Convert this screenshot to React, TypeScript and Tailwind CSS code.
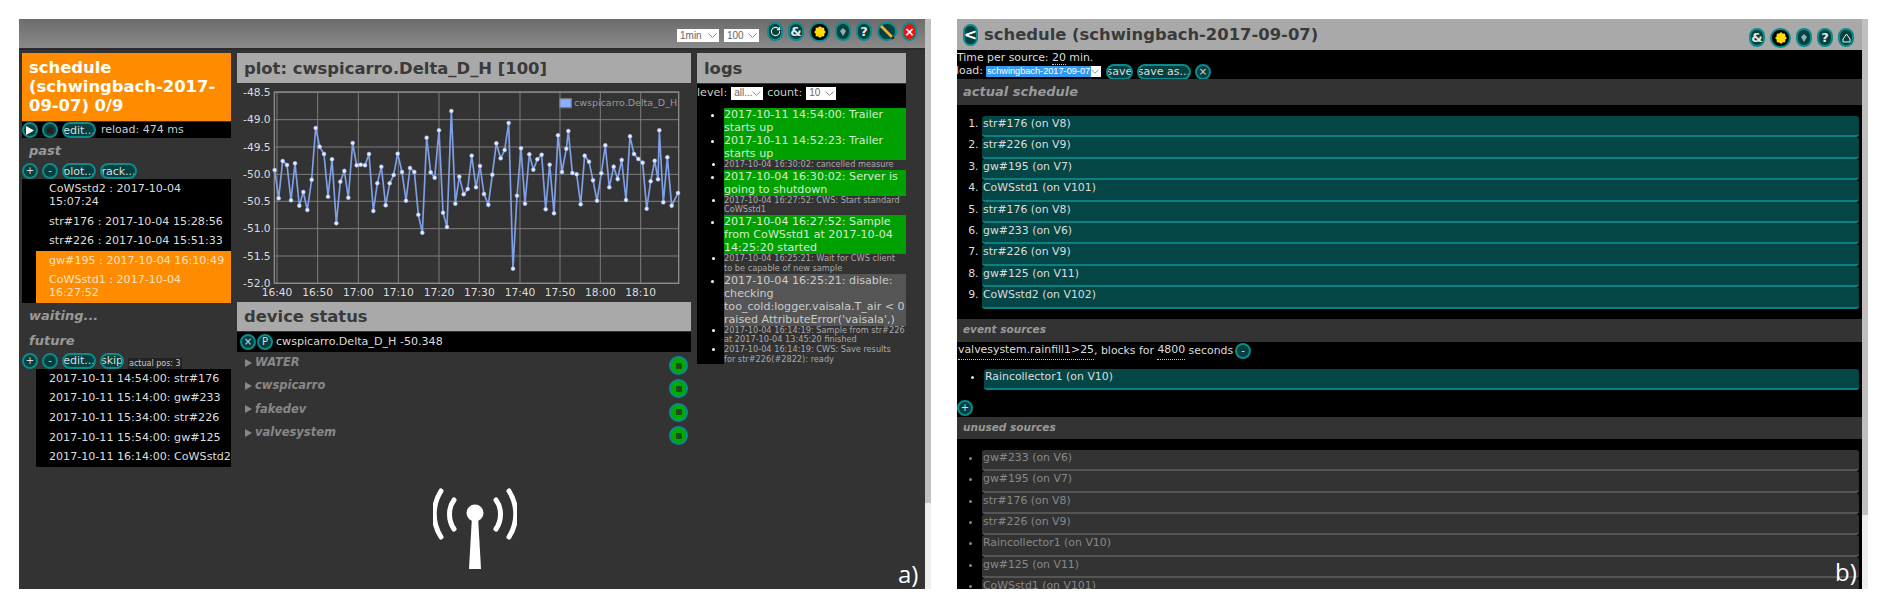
import type { ReactNode } from 'react';
import { RotateCw } from 'lucide-react';

const font = { fontFamily: '"DejaVu Sans", sans-serif' };
const arial = { fontFamily: '"Liberation Sans", sans-serif' };

const points = [
  [134, 390], [146, 475], [158, 363], [171, 375], [183, 481], [195, 370], [208, 497], [220, 456], [232, 510], [245, 419],
  [257, 264], [269, 320], [282, 342], [294, 470], [306, 358], [319, 550], [331, 425], [343, 393], [355, 473], [368, 309],
  [380, 376], [392, 374], [405, 376], [417, 342], [430, 513], [442, 430], [454, 380], [467, 496], [479, 430], [491, 405],
  [503, 341], [516, 396], [528, 482], [540, 384], [553, 396], [565, 524], [577, 578], [590, 293], [602, 397], [614, 413],
  [627, 271], [639, 518], [651, 561], [664, 213], [676, 491], [688, 410], [701, 463], [713, 447], [725, 347], [738, 442],
  [750, 378], [762, 462], [775, 494], [787, 404], [799, 310], [812, 355], [824, 330], [836, 249], [849, 686], [861, 467],
  [873, 325], [885, 491], [898, 343], [910, 389], [922, 358], [935, 344], [947, 508], [959, 374], [972, 520], [984, 286],
  [996, 396], [1009, 326], [1015, 273], [1027, 399], [1040, 403], [1052, 493], [1064, 347], [1077, 365], [1089, 421], [1101, 482],
  [1114, 400], [1126, 316], [1138, 442], [1151, 380], [1163, 417], [1175, 360], [1188, 480], [1200, 289], [1212, 342], [1225, 357],
  [1238, 368], [1250, 506], [1262, 424], [1274, 362], [1284, 418], [1288, 271], [1300, 487], [1312, 352], [1325, 497], [1344, 459],
];

const yTicks = [
  ['-48.5', 157], ['-49.0', 239], ['-49.5', 321], ['-50.0', 403],
  ['-50.5', 484], ['-51.0', 566], ['-51.5', 648], ['-52.0', 730],
] as const;

const xTicks = [
  ['16:40', 141], ['16:50', 263], ['17:00', 385], ['17:10', 505], ['17:20', 627],
  ['17:30', 748], ['17:40', 870], ['17:50', 990], ['18:00', 1111], ['18:10', 1232],
] as const;

const logs = [
  { kind: 'green', text: '2017-10-11 14:54:00: Trailer starts up' },
  { kind: 'green', text: '2017-10-11 14:52:23: Trailer starts up' },
  { kind: 'small', text: '2017-10-04 16:30:02: cancelled measure' },
  { kind: 'green', text: '2017-10-04 16:30:02: Server is going to shutdown' },
  { kind: 'small', text: '2017-10-04 16:27:52: CWS: Start standard CoWSstd1' },
  { kind: 'green', text: '2017-10-04 16:27:52: Sample from CoWSstd1 at 2017-10-04 14:25:20 started' },
  { kind: 'small', text: '2017-10-04 16:25:21: Wait for CWS client\nto be capable of new sample' },
  { kind: 'gray', text: "2017-10-04 16:25:21: disable: checking too_cold:logger.vaisala.T_air < 0 raised AttributeError('vaisala',)" },
  { kind: 'small', text: '2017-10-04 16:14:19: Sample from str#226 at 2017-10-04 13:45:20 finished' },
  { kind: 'small', text: '2017-10-04 16:14:19: CWS: Save results\nfor str#226(#2822): ready' },
];

const actual = [
  'str#176 (on V8)', 'str#226 (on V9)', 'gw#195 (on V7)', 'CoWSstd1 (on V101)', 'str#176 (on V8)',
  'gw#233 (on V6)', 'str#226 (on V9)', 'gw#125 (on V11)', 'CoWSstd2 (on V102)',
];

const unused = [
  'gw#233 (on V6)', 'gw#195 (on V7)', 'str#176 (on V8)', 'str#226 (on V9)',
  'Raincollector1 (on V10)', 'gw#125 (on V11)', 'CoWSstd1 (on V101)',
];

function Round({ children, className = '' }: { children?: ReactNode; className?: string }) {
  return (
    <span className={`flex h-4 w-4 shrink-0 items-center justify-center rounded-full border-2 border-[#0b8b8b] bg-[#044040] text-[10px] leading-none text-[#ddd] ${className}`}>
      {children}
    </span>
  );
}

function Pill({ children, className = '' }: { children: ReactNode; className?: string }) {
  return (
    <span className={`flex h-4 shrink-0 items-center justify-center overflow-hidden whitespace-nowrap rounded-full border-2 border-[#0b8b8b] bg-[#044040] text-[11px] leading-none text-[#ddd] ${className}`}>
      {children}
    </span>
  );
}

function TopIcon({ children, className = '' }: { children: ReactNode; className?: string }) {
  return (
    <span className={`flex h-[19px] items-center justify-center rounded-full border-2 border-[#0b8b8b] bg-[#044040] text-[13px] font-bold leading-none text-[#e8e8e8] ${className}`}>
      {children}
    </span>
  );
}

function Sun() {
  return (
    <span className="flex h-5 w-[21px] items-center justify-center rounded-full border-2 border-[#0b8b8b] bg-black">
      <svg width="12" height="12" viewBox="0 0 12 12">
        <polygon fill="#ffdd00" points="6,0 7.6,1.6 10.2,1.8 10.4,4.4 12,6 10.4,7.6 10.2,10.2 7.6,10.4 6,12 4.4,10.4 1.8,10.2 1.6,7.6 0,6 1.6,4.4 1.8,1.8 4.4,1.6" />
      </svg>
    </span>
  );
}

function Diamond() {
  return (
    <svg width="6" height="8" viewBox="0 0 6 8">
      <polygon fill="#8fb0b0" points="3,0 6,3 3,8 0,3" />
    </svg>
  );
}

function Select({ label, className }: { label: string; className: string }) {
  return (
    <span className={`flex h-[13px] items-center justify-between bg-white pl-[3px] pr-[2px] text-[10px] leading-none text-[#666] ${className}`} style={arial}>
      {label}
      <svg width="9" height="5" viewBox="0 0 9 5">
        <path d="M0.5 0.5 L4.5 4.5 L8.5 0.5" fill="none" stroke="#888" />
      </svg>
    </span>
  );
}

function Title({ children, className = '' }: { children: ReactNode; className?: string }) {
  return <h3 className={`text-[16.4px] font-bold leading-[19px] ${className}`}>{children}</h3>;
}

function Heading({ children }: { children: ReactNode }) {
  return <div className="flex h-[25px] items-center pl-[7px] text-[13px] font-bold italic text-[#999]">{children}</div>;
}

function Chart() {
  return (
    <svg width="454" height="217" viewBox="21 132 1362 651" className="block">
      {yTicks.map(([label, y]) => (
        <g key={label}>
          <line x1="135" x2="1346" y1={y} y2={y} stroke="#7d7d7d" strokeWidth="3" />
          <text x="122" y={y + 11} textAnchor="end" fontSize="32" fill="#ddd">{label}</text>
        </g>
      ))}
      {xTicks.map(([label, x]) => (
        <g key={label}>
          <line x1={x} x2={x} y1="157" y2="730" stroke="#7d7d7d" strokeWidth="3" />
          <text x={x} y="768" textAnchor="middle" fontSize="32" fill="#ddd">{label}</text>
        </g>
      ))}
      <rect x="133" y="156" width="1213" height="574" fill="none" stroke="#8c8c8c" strokeWidth="4" />
      <polyline points={points.map((p) => p.join(',')).join(' ')} fill="none" stroke="#7f9fe6" strokeWidth="5" />
      {points.map(([x, y]) => (
        <circle key={x} cx={x} cy={y} r="6" fill="#e4ebff" stroke="#8aa8ee" strokeWidth="1.5" />
      ))}
      <rect x="989" y="176" width="35" height="27" fill="#8ab0ff" stroke="#777" strokeWidth="4" />
      <text x="1032" y="199" fontSize="28.5" fill="#999">cwspicarro.Delta_D_H</text>
    </svg>
  );
}

function Antenna() {
  return (
    <svg width="84" height="84" viewBox="0 0 84 84" className="absolute left-[433px] top-[488px]">
      <g fill="none" stroke="#fff" strokeWidth="5" strokeLinecap="round">
        <path d="M8 3 C-1 17 -1 35 8 49" />
        <path d="M76 3 C85 17 85 35 76 49" />
        <path d="M21 12 C15 20 15 32 21 41" />
        <path d="M63 12 C69 20 69 32 63 41" />
      </g>
      <ellipse cx="42" cy="25" rx="8.5" ry="8.5" fill="#fff" />
      <polygon fill="#fff" points="39,28 45,28 48,81 36,81" />
    </svg>
  );
}

function ScheduleColumn() {
  return (
    <div className="flex w-[209px] shrink-0 flex-col">
      <div className="h-[68px] bg-[#ff8c00] pl-[7px] pt-[5px]">
        <Title className="text-white">schedule (schwingbach-2017-09-07) 0/9</Title>
      </div>
      <div className="mt-px flex h-4 items-center gap-1 bg-black text-[11px] text-[#ccc]">
        <Round>
          <svg width="8" height="9" viewBox="0 0 8 9"><polygon points="0,0 8,4.5 0,9" fill="#fff" /></svg>
        </Round>
        <Round>
          <span className="h-[6px] w-[6px] bg-[#222]" />
        </Round>
        <Pill className="w-[34px]">edit...</Pill>
        <span className="ml-[1px] whitespace-nowrap">reload: 474 ms</span>
      </div>
      <Heading>past</Heading>
      <div className="flex h-4 items-center gap-1">
        <Round>+</Round>
        <Round>-</Round>
        <Pill className="w-[34px]">plot...</Pill>
        <Pill className="w-[37px]">rack...</Pill>
      </div>
      <div className="bg-black pl-[14px] text-[11.1px] leading-[13.4px] text-[#ddd]">
        <div className="pl-[13px] py-[3px]">CoWSstd2 : 2017-10-04 15:07:24</div>
        <div className="pl-[13px] py-[3px]">str#176 : 2017-10-04 15:28:56</div>
        <div className="pl-[13px] py-[3px]">str#226 : 2017-10-04 15:51:33</div>
        <div className="bg-[#ff8c00] text-[#f6e2c4]">
          <div className="pl-[13px] py-[3px]">gw#195 : 2017-10-04 16:10:49</div>
          <div className="pl-[13px] py-[3px]">CoWSstd1 : 2017-10-04 16:27:52</div>
        </div>
      </div>
      <Heading>waiting...</Heading>
      <Heading>future</Heading>
      <div className="flex h-4 items-center gap-1">
        <Round>+</Round>
        <Round>-</Round>
        <Pill className="w-[34px]">edit...</Pill>
        <Pill className="w-6">skip</Pill>
        <span className="mt-[5px] h-[11px] whitespace-nowrap bg-[#222] px-[1px] text-[8px] leading-[11px] text-[#ccc]">actual pos: 3</span>
      </div>
      <div className="ml-[14px] whitespace-nowrap bg-black pl-[13px] text-[11.1px] leading-[19.6px] text-[#ddd]">
        <div>2017-10-11 14:54:00: str#176</div>
        <div>2017-10-11 15:14:00: gw#233</div>
        <div>2017-10-11 15:34:00: str#226</div>
        <div>2017-10-11 15:54:00: gw#125</div>
        <div>2017-10-11 16:14:00: CoWSstd2</div>
      </div>
    </div>
  );
}

function PlotColumn() {
  const devices = ['WATER', 'cwspicarro', 'fakedev', 'valvesystem'];
  return (
    <div className="flex w-[454px] shrink-0 flex-col">
      <div className="flex h-[30px] items-center bg-[#a9a9a9] pl-[7px]">
        <Title className="text-[#3a3a3a]">plot: cwspicarro.Delta_D_H [100]</Title>
      </div>
      <div className="mt-px h-[217px]">
        <Chart />
      </div>
      <div className="mt-px flex h-[29px] items-center bg-[#a9a9a9] pl-[7px]">
        <Title className="text-[#3a3a3a]">device status</Title>
      </div>
      <div className="mt-px flex h-5 items-center bg-black pl-[3px] text-[11.1px] text-[#ddd]">
        <Round>×</Round>
        <Round className="ml-px">P</Round>
        <span className="ml-[3px]">cwspicarro.Delta_D_H -50.348</span>
      </div>
      <div className="mt-[1px] flex flex-col">
        {devices.map((name) => (
          <div key={name} className="flex h-[23.4px] items-start justify-between pr-[3px]">
            <span className="mt-[2px] flex items-center pl-2 text-[11.5px] font-bold italic leading-[15px] text-[#888]">
              <svg width="7" height="8" viewBox="0 0 7 8" className="mr-[3px]"><polygon points="0,0 7,4 0,8" fill="#888" /></svg>
              {name}
            </span>
            <span className="mt-[3px] flex h-[19px] w-[19px] items-center justify-center rounded-full border-2 border-[#0b8b8b] bg-[#00aa00]">
              <span className="h-[6px] w-[6px] rounded-[1px] bg-[#1d4a1d]" />
            </span>
          </div>
        ))}
      </div>
    </div>
  );
}

function LogsColumn() {
  return (
    <div className="flex w-[209px] shrink-0 flex-col">
      <div className="flex h-[30px] items-center bg-[#a9a9a9] pl-[7px]">
        <Title className="text-[#3a3a3a]">logs</Title>
      </div>
      <div className="mt-px h-[24px] bg-black pt-[1px] text-[11.1px] text-[#ccc]">
        <div className="flex items-center">
          <span>level:</span>
          <Select label="all..." className="ml-[4px] w-[32px]" />
          <span className="ml-[4px]">count:</span>
          <Select label="10" className="ml-[4px] w-[30px]" />
        </div>
      </div>
      <ul className="list-disc bg-black pl-[27px] marker:text-white">
        {logs.map((log) => {
          if (log.kind === 'small') {
            return (
              <li key={log.text} className="whitespace-pre-line bg-[#333] text-[8.2px] leading-[9.7px] text-[#aaa]">
                {log.text}
              </li>
            );
          }
          return (
            <li
              key={log.text}
              className={`text-[11.1px] leading-[13px] ${log.kind === 'green' ? 'bg-[#00a000] text-[#d6ecd6]' : 'bg-[#555] text-[#ccc]'}`}
            >
              {log.text}
            </li>
          );
        })}
      </ul>
    </div>
  );
}

function LeftWindow() {
  return (
    <div className="flex h-[570px] w-[912px] shrink-0">
      <div className="flex w-[906px] flex-col bg-[#333]">
        <div className="flex h-[31px] shrink-0 items-start justify-end gap-[5px] border-b-2 border-[#2a2a2a] bg-gradient-to-b from-[#6c6c6c] to-[#8a8a8a] pr-[8px] pt-[3px]">
          <Select label="1min" className="mt-[7px] w-[42px]" />
          <Select label="100" className="mr-[3px] mt-[7px] w-[35px]" />
          <TopIcon className="w-4">
            <RotateCw size={11} strokeWidth={2.5} />
          </TopIcon>
          <TopIcon className="w-4">&amp;</TopIcon>
          <Sun />
          <TopIcon className="w-[16px]">
            <Diamond />
          </TopIcon>
          <TopIcon className="w-4">?</TopIcon>
          <span className="flex h-[19px] w-[20px] items-center justify-center rounded-full border-2 border-[#0b8b8b] bg-[#044040]">
            <svg width="14" height="14" viewBox="0 0 14 14">
              <line x1="1" y1="1" x2="12" y2="12" stroke="#f0b030" strokeWidth="2.6" />
              <line x1="12" y1="12" x2="14" y2="14" stroke="#222" strokeWidth="2.6" />
            </svg>
          </span>
          <span className="flex h-[19px] w-[15px] items-center justify-center rounded-full border-2 border-[#0b8b8b] bg-[#ee1111] text-[12px] font-bold leading-none text-white">×</span>
        </div>
        <div className="flex flex-1 gap-[6px] pl-[3px] pt-[3px]">
          <ScheduleColumn />
          <PlotColumn />
          <LogsColumn />
        </div>
      </div>
      <div className="flex w-[6px] flex-col bg-[#eee]">
        <div className="h-[484px] bg-[#c0c0c0]" />
      </div>
    </div>
  );
}

function Band({ children, className }: { children: ReactNode; className: string }) {
  return <div className={`flex items-center bg-[#333] pl-[6px] font-bold italic text-[#999] ${className}`}>{children}</div>;
}

function Source({ children, off }: { children: ReactNode; off?: boolean }) {
  return (
    <li className={`h-[21.4px] rounded-[3px] border-b-2 pl-[1px] text-[10.9px] leading-[15px] ${off ? 'border-[#555] bg-[#333] text-[#888]' : 'border-[#0b8080] bg-[#044545] text-[#ddd]'}`}>
      {children}
    </li>
  );
}

function RightWindow() {
  return (
    <div className="flex h-[570px] w-[911px] shrink-0">
      <div className="flex w-[905px] flex-col overflow-hidden bg-black text-[10.9px] text-[#ddd]">
        <div className="flex h-[31px] shrink-0 items-center bg-[#a9a9a9] pl-[6px] pr-[8px]">
          <span className="flex h-[22px] w-[15px] items-center justify-center rounded-full border-2 border-[#0b8b8b] bg-[#044040] text-[16px] font-bold leading-none text-white">&lt;</span>
          <Title className="ml-[6px] text-[#3a3a3a]">schedule (schwingbach-2017-09-07)</Title>
          <div className="ml-auto mt-[6px] flex items-center gap-[5px]">
            <TopIcon className="w-4">&amp;</TopIcon>
            <Sun />
            <TopIcon className="w-4">
              <Diamond />
            </TopIcon>
            <TopIcon className="w-4">?</TopIcon>
            <TopIcon className="w-4">
              <svg width="9" height="10" viewBox="0 0 9 10">
                <path d="M4.5 1 L8 6 V9 H1 V6 Z" fill="none" stroke="#dfe" strokeWidth="1" strokeLinejoin="round" />
              </svg>
            </TopIcon>
          </div>
        </div>
        <div className="h-[29px] shrink-0">
          <div className="h-[14px] leading-[15px]">
            Time per source: <span className="border-b border-dotted border-[#ccc]">20</span> min.
          </div>
          <div className="flex h-[15px] items-center overflow-hidden">
            <span className="-ml-[1px]">load:</span>
            <span className="ml-[3px] flex h-[11px] w-[115px] items-center whitespace-nowrap bg-white leading-none" style={arial}>
              <span className="bg-[#3399ee] px-[1px] text-[9.2px] leading-[11px] text-white">schwingbach-2017-09-07</span>
              <svg width="8" height="5" viewBox="0 0 9 5" className="ml-auto mr-[2px]">
                <path d="M0.5 0.5 L4.5 4.5 L8.5 0.5" fill="none" stroke="#888" />
              </svg>
            </span>
            <Pill className="ml-[5px] w-[27px]">save</Pill>
            <Pill className="ml-[4px] w-[54px]">save as...</Pill>
            <Round className="ml-[4px]">×</Round>
          </div>
        </div>
        <Band className="h-[26px] shrink-0 text-[13px]">actual schedule</Band>
        <ol className="shrink-0 list-decimal pb-[10px] pl-[25px] pr-[3px] pt-[11px] marker:text-[#ddd]">
          {actual.map((s, i) => (
            <Source key={i}>{s}</Source>
          ))}
        </ol>
        <Band className="h-[23px] shrink-0 text-[10.5px]">event sources</Band>
        <div className="flex h-[19px] shrink-0 items-center pl-[1px]">
          <span className="border-b border-dotted border-[#ccc]">valvesystem.rainfill1&gt;25</span>
          <span>, blocks for&nbsp;</span>
          <span className="border-b border-dotted border-[#ccc]">4800</span>
          <span>&nbsp;seconds</span>
          <Round className="ml-[2px]">-</Round>
        </div>
        <ul className="shrink-0 list-disc pl-[27px] pr-[3px] pt-[8px] marker:text-[#ddd]">
          <Source>Raincollector1 (on V10)</Source>
        </ul>
        <div className="h-[27px] shrink-0 pt-[10px]">
          <Round>+</Round>
        </div>
        <Band className="h-[22px] shrink-0 text-[10.5px]">unused sources</Band>
        <ul className="shrink-0 list-disc pl-[25px] pr-[3px] pt-[11px] marker:text-[#888]">
          {unused.map((s) => (
            <Source key={s} off>{s}</Source>
          ))}
        </ul>
      </div>
      <div className="flex w-[6px] flex-col bg-[#eee]">
        <div className="h-[496px] bg-[#c0c0c0]" />
      </div>
    </div>
  );
}

export default function App() {
  return (
    <div className="relative h-[610px] w-[1892px] overflow-hidden bg-white" style={font}>
      <div className="flex gap-[26px] pl-[19px] pt-[19px]">
        <LeftWindow />
        <RightWindow />
      </div>
      <Antenna />
      <span className="absolute left-[898px] top-[560px] text-[24px] leading-[28px] text-white" style={{ fontFamily: '"Open Sans", sans-serif' }}>a)</span>
      <span className="absolute left-[1835px] top-[558px] text-[24px] leading-[28px] text-white" style={{ fontFamily: '"Open Sans", sans-serif' }}>b)</span>
    </div>
  );
}
